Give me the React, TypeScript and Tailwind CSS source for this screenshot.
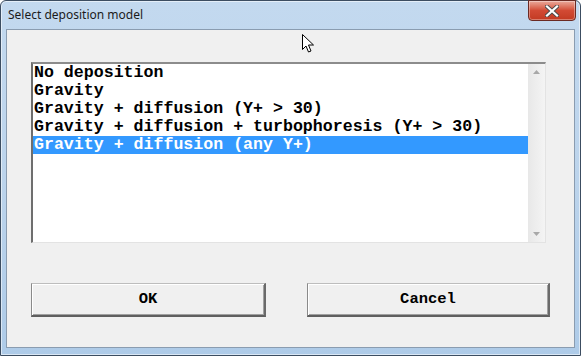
import React from "react";

const items = [
  "No deposition",
  "Gravity",
  "Gravity + diffusion (Y+ > 30)",
  "Gravity + diffusion + turbophoresis (Y+ > 30)",
  "Gravity + diffusion (any Y+)",
];

const mono = { fontFamily: '"Liberation Mono", "Courier New", monospace' };

export default function App() {
  return (
    <div className="relative w-[581px] h-[356px] overflow-hidden bg-white">
      <div className="flex flex-col w-[581px] h-[356px] rounded-t-[6px] border border-[#3c4d61] bg-gradient-to-b from-[#c3d9ef] via-[#bcd4ec] to-[#aecbe8] shadow-[inset_0_0_0_1px_rgba(255,255,255,0.55)]">
        {/* title bar */}
        <div className="relative flex h-[28px] shrink-0 items-center pl-[7px]">
          <span
            className="text-[12px] text-[#1b1b1b]"
            style={{ fontFamily: '"Noto Sans", "Open Sans", sans-serif' }}
          >
            Select deposition model
          </span>
          <div className="absolute right-[4px] top-[-1px] flex h-[21px] w-[48px] items-center justify-center rounded-b-[4px] border border-[#6b2a23] bg-gradient-to-b from-[#e9a99b] via-[#d24a34] to-[#c23a22] shadow-[inset_0_0_0_1px_rgba(255,255,255,0.35)]">
            <svg width="14" height="12" viewBox="0 0 14 12">
              <path
                d="M2 1.5 L12 10.5 M12 1.5 L2 10.5"
                stroke="#4b4b4b"
                strokeWidth="4"
                strokeLinecap="square"
              />
              <path
                d="M2 1.5 L12 10.5 M12 1.5 L2 10.5"
                stroke="#ffffff"
                strokeWidth="2.2"
                strokeLinecap="square"
              />
            </svg>
          </div>
        </div>
        {/* client area */}
        <div className="mx-[5px] mb-[7px] flex flex-1 flex-col border border-[#8a9cb0] bg-[#f0f0f0] pl-[24px] pr-[24px] pt-[32px]">
          {/* listbox */}
          <div className="flex h-[181px] w-[515px] border-t-2 border-l-2 border-b border-r border-t-[#8c8c8c] border-l-[#6e6e6e] border-b-[#e3e3e3] border-r-[#e3e3e3] bg-white">
            <div className="flex-1" style={mono}>
              {items.map((t, i) => (
                <div
                  key={t}
                  className={`h-[18px] whitespace-pre pl-[1px] text-[16.6px] font-bold leading-[18px] ${
                    i === 4 ? "bg-[#3399ff] text-white" : "text-black"
                  }`}
                >
                  {t}
                </div>
              ))}
            </div>
            <div className="flex w-[17px] flex-col items-center justify-between bg-gradient-to-r from-[#e8e8e8] to-[#f4f4f4] py-[6px]">
              <svg width="7" height="4" viewBox="0 0 7 4">
                <path d="M0 4 L3.5 0 L7 4 Z" fill="#a8a8a8" />
              </svg>
              <svg width="7" height="4" viewBox="0 0 7 4">
                <path d="M0 0 L3.5 4 L7 0 Z" fill="#a8a8a8" />
              </svg>
            </div>
          </div>
          {/* buttons */}
          <div className="mt-[40px] flex justify-between" style={mono}>
            <div className="flex h-[34px] w-[235px] items-center justify-center border-t border-l border-b-2 border-r-2 border-t-[#bdbdbd] border-l-[#8a8a8a] border-b-[#5f5f5f] border-r-[#6a6a6a] bg-[#f0f0f0] text-[15.5px] font-bold text-black shadow-[inset_1px_1px_0_#ffffff,inset_-1px_-1px_0_#a0a0a0]">
              OK
            </div>
            <div className="flex h-[34px] w-[243px] items-center justify-center border-t border-l border-b-2 border-r-2 border-t-[#bdbdbd] border-l-[#8a8a8a] border-b-[#5f5f5f] border-r-[#6a6a6a] bg-[#f0f0f0] text-[15.5px] font-bold text-black shadow-[inset_1px_1px_0_#ffffff,inset_-1px_-1px_0_#a0a0a0]">
              Cancel
            </div>
          </div>
        </div>
      </div>
      {/* mouse cursor */}
      <svg
        className="absolute left-[302px] top-[34px]"
        width="13"
        height="20"
        viewBox="0 0 13 20"
      >
        <path
          d="M0.5 0.5 L0.5 15.5 L4 12 L6.5 18 L9 17 L6.5 11 L11.5 11 Z"
          fill="#ffffff"
          stroke="#000000"
          strokeWidth="1"
          strokeLinejoin="miter"
        />
      </svg>
    </div>
  );
}
